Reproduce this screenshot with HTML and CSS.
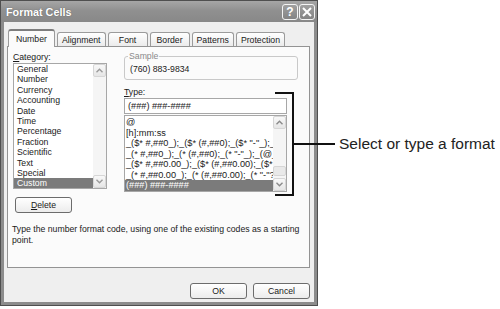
FILE: index.html
```html
<!DOCTYPE html>
<html lang="en">
<head>
<meta charset="UTF-8">
<title>Format Cells</title>
<link rel="stylesheet" href="styles.css">
</head>
<body>
    <div class="page">
        <div class="dialog">
            <div class="titlebar">
                <span class="title">Format Cells</span>
                <div class="tbtns">
                    <span class="tbtn">?</span>
                    <span class="tbtn">
                        <svg width="10" height="10" viewBox="0 0 10 10"><path d="M1 1 L9 9 M9 1 L1 9" stroke="#fff" stroke-width="2" fill="none"/></svg>
                    </span>
                </div>
            </div>

            <div class="body">
                <div class="tabs">
                    <div class="tab active">Number</div>
                    <div class="tab">Alignment</div>
                    <div class="tab">Font</div>
                    <div class="tab">Border</div>
                    <div class="tab">Patterns</div>
                    <div class="tab">Protection</div>
                </div>

                <div class="panel">
                    <div class="cols">
                        <div class="left-col">
                            <div class="lbl"><u>C</u>ategory:</div>
                            <div class="listbox cat-list">
                                <div class="items">
                                    <div class="item">General</div>
                                    <div class="item">Number</div>
                                    <div class="item">Currency</div>
                                    <div class="item">Accounting</div>
                                    <div class="item">Date</div>
                                    <div class="item">Time</div>
                                    <div class="item">Percentage</div>
                                    <div class="item">Fraction</div>
                                    <div class="item">Scientific</div>
                                    <div class="item">Text</div>
                                    <div class="item">Special</div>
                                    <div class="item sel">Custom</div>
                                </div>
                                <div class="scroll">
                                    <div class="arrow"><svg width="7" height="5" viewBox="0 0 7 5"><path d="M0.5 4.2 L3.5 1.2 L6.5 4.2" stroke="#9a9a9a" stroke-width="1.4" fill="none"/></svg></div>
                                    <div class="track"></div>
                                    <div class="arrow"><svg width="7" height="5" viewBox="0 0 7 5"><path d="M0.5 0.8 L3.5 3.8 L6.5 0.8" stroke="#9a9a9a" stroke-width="1.4" fill="none"/></svg></div>
                                </div>
                            </div>
                            <button class="btn delete-btn"><u>D</u>elete</button>
                        </div>

                        <div class="right-col">
                            <fieldset class="sample">
                                <legend>Sample</legend>
                                <div class="sample-text">(760) 883-9834</div>
                            </fieldset>
                            <div class="lbl type-lbl"><u>T</u>ype:</div>
                            <div class="typebox">
                                <div class="input">(###) ###-####</div>
                                <div class="listbox type-list">
                                    <div class="items">
                                        <div class="item">@</div>
                                        <div class="item">[h]:mm:ss</div>
                                        <div class="item">_($* #,##0_);_($* (#,##0);_($* "-"_);_(@_)</div>
                                        <div class="item">_(* #,##0_);_(* (#,##0);_(* "-"_);_(@_)</div>
                                        <div class="item">_($* #,##0.00_);_($* (#,##0.00);_($* "-"??_);_(@_)</div>
                                        <div class="item">_(* #,##0.00_);_(* (#,##0.00);_(* "-"??_);_(@_)</div>
                                        <div class="item sel">(###) ###-####</div>
                                    </div>
                                    <div class="scroll">
                                        <div class="arrow"><svg width="7" height="5" viewBox="0 0 7 5"><path d="M0.5 4.2 L3.5 1.2 L6.5 4.2" stroke="#8a8a8a" stroke-width="1.4" fill="none"/></svg></div>
                                        <div class="track"><div class="thumb"></div></div>
                                        <div class="arrow"><svg width="7" height="5" viewBox="0 0 7 5"><path d="M0.5 0.8 L3.5 3.8 L6.5 0.8" stroke="#8a8a8a" stroke-width="1.4" fill="none"/></svg></div>
                                    </div>
                                </div>
                                <!-- callout bracket drawn over the dialog -->
                                <div class="bracket"></div>
                            </div>
                        </div>
                    </div>

                    <p class="hint">Type the number format code, using one of the existing codes as a starting point.</p>
                </div>

                <div class="buttons">
                    <button class="btn">OK</button>
                    <button class="btn">Cancel</button>
                </div>
            </div>
        </div>

        <div class="callout">Select or type a format</div>
    </div>
</body>
</html>
```

FILE: styles.css
```css
body, html {
    margin: 0;
    padding: 0;
    background: #fff;
    overflow: hidden;
}
body {
    font-family: "Liberation Sans", Arial, sans-serif;
    font-size: 8.7px;
    color: #1a1a1a;
}
.page {
    display: flex;
    align-items: flex-start;
}

/* Window frame */
.dialog {
    width: 318px;
    height: 306px;
    box-sizing: border-box;
    border: 1px solid #4f4f4f;
    background: #8c8c8c;
    display: flex;
    flex-direction: column;
}
.titlebar {
    height: 21px;
    display: flex;
    align-items: center;
    justify-content: space-between;
    padding: 0 2px 0 5px;
    background: linear-gradient(#a6a6a6, #909090 45%, #888);
}
.title {
    color: #fff;
    font-weight: bold;
    font-size: 10.8px;
    text-shadow: 0 0 1px #555;
}
.tbtns {
    display: flex;
    gap: 1px;
}
.tbtn {
    width: 16px;
    height: 16px;
    box-sizing: border-box;
    border: 1px solid #f4f4f4;
    border-radius: 3px;
    background: linear-gradient(#a0a0a0, #848484);
    color: #fff;
    font-weight: bold;
    font-size: 12px;
    display: flex;
    align-items: center;
    justify-content: center;
}

.body {
    flex: 1;
    margin: 0 3px 3px;
    padding: 7px 4px 0 3px;
    background: #efefef;
    display: flex;
    flex-direction: column;
}

/* Tabs */
.tabs {
    display: flex;
    align-items: flex-end;
    height: 17px;
    padding-left: 1px;
    gap: 2px;
}
.tab {
    height: 14px;
    min-width: 40px;
    box-sizing: border-box;
    padding: 0 4px;
    border: 1px solid #9b9b9b;
    border-bottom: none;
    border-radius: 3px 3px 0 0;
    background: linear-gradient(#fff, #ebebeb);
    display: flex;
    align-items: center;
    justify-content: center;
}
.tab.active {
    height: 18px;
    margin-bottom: -1px;
    padding: 0 7px;
    background: #fbfbfb;
    border-top: 2px solid #7d7d7d;
    position: relative;
    z-index: 1;
}

.panel {
    height: 222px;
    box-sizing: border-box;
    border: 1px solid #939393;
    background: #fbfbfb;
    padding: 5px 6px 0 5px;
}
.cols {
    display: flex;
    gap: 17px;
}
.left-col {
    width: 94px;
    display: flex;
    flex-direction: column;
}
.right-col {
    width: 174px;
    display: flex;
    flex-direction: column;
}
.lbl {
    line-height: 11px;
}

/* List boxes */
.listbox {
    border: 1px solid #a7a7a7;
    background: #fff;
    display: flex;
    overflow: hidden;
    box-sizing: border-box;
}
.items {
    flex: 1;
    min-width: 0;
    overflow: hidden;
}
.item {
    white-space: nowrap;
}
.item.sel {
    background: #7b7b7b;
    color: #fff;
}
.cat-list {
    height: 126px;
}
.cat-list .item {
    height: 10.4px;
    line-height: 10.4px;
    padding-left: 3px;
}
.type-list {
    height: 77px;
    margin-top: 1px;
}
.type-list .items {
    padding-top: 1px;
}
.type-list .item {
    height: 10.5px;
    line-height: 10.5px;
    padding-left: 1px;
    font-size: 9.2px;
}
.scroll {
    width: 13px;
    display: flex;
    flex-direction: column;
    background: #f5f5f5;
}
.arrow {
    height: 13px;
    box-sizing: border-box;
    border: 1px solid #d6d6d6;
    border-radius: 2px;
    background: linear-gradient(#f8f8f8, #e6e6e6);
    display: flex;
    align-items: center;
    justify-content: center;
}
.track {
    flex: 1;
    display: flex;
    flex-direction: column;
    justify-content: flex-end;
}
.thumb {
    height: 8px;
    margin-bottom: 2px;
    border: 1px solid #d6d6d6;
    border-radius: 2px;
    background: #e9e9e9;
}

/* Buttons */
.btn {
    font-family: inherit;
    font-size: 8.7px;
    color: #1a1a1a;
    height: 16px;
    width: 57px;
    padding: 0;
    border: 1px solid #6c6c6c;
    border-radius: 3px;
    background: linear-gradient(#fff, #ececec);
}
.delete-btn {
    margin: 8px 0 0 2px;
}

/* Sample group */
.sample {
    margin: 0;
    padding: 2px 4px 4px 3px;
    border: 1px solid #c9c9c9;
    border-radius: 3px;
}
.sample legend {
    padding: 0 1px;
    line-height: 9px;
    color: #8a8a8a;
}
.sample-text {
    line-height: 12px;
    padding-left: 2px;
}
.type-lbl {
    margin-top: 7px;
}
.typebox {
    position: relative;
    width: 163px;
}
.input {
    height: 16px;
    box-sizing: border-box;
    border: 1px solid #a7a7a7;
    background: #fff;
    line-height: 14px;
    padding-left: 3px;
    font-size: 9.2px;
}

/* Callout bracket */
.bracket {
    position: absolute;
    left: 151px;
    top: -6px;
    bottom: -4px;
    width: 17px;
    border: 2px solid #111;
    border-left: none;
}
.bracket::after {
    content: "";
    position: absolute;
    top: calc(50% - 1px);
    right: -43px;
    width: 41px;
    height: 2px;
    background: #111;
}

.hint {
    margin: 11px 0 0 -1px;
    line-height: 11px;
}

.buttons {
    display: flex;
    justify-content: flex-end;
    gap: 6px;
    margin-top: 15px;
}

.callout {
    margin: 135px 0 0 21px;
    font-size: 15.5px;
    line-height: 18px;
    color: #222;
    white-space: nowrap;
}
```
